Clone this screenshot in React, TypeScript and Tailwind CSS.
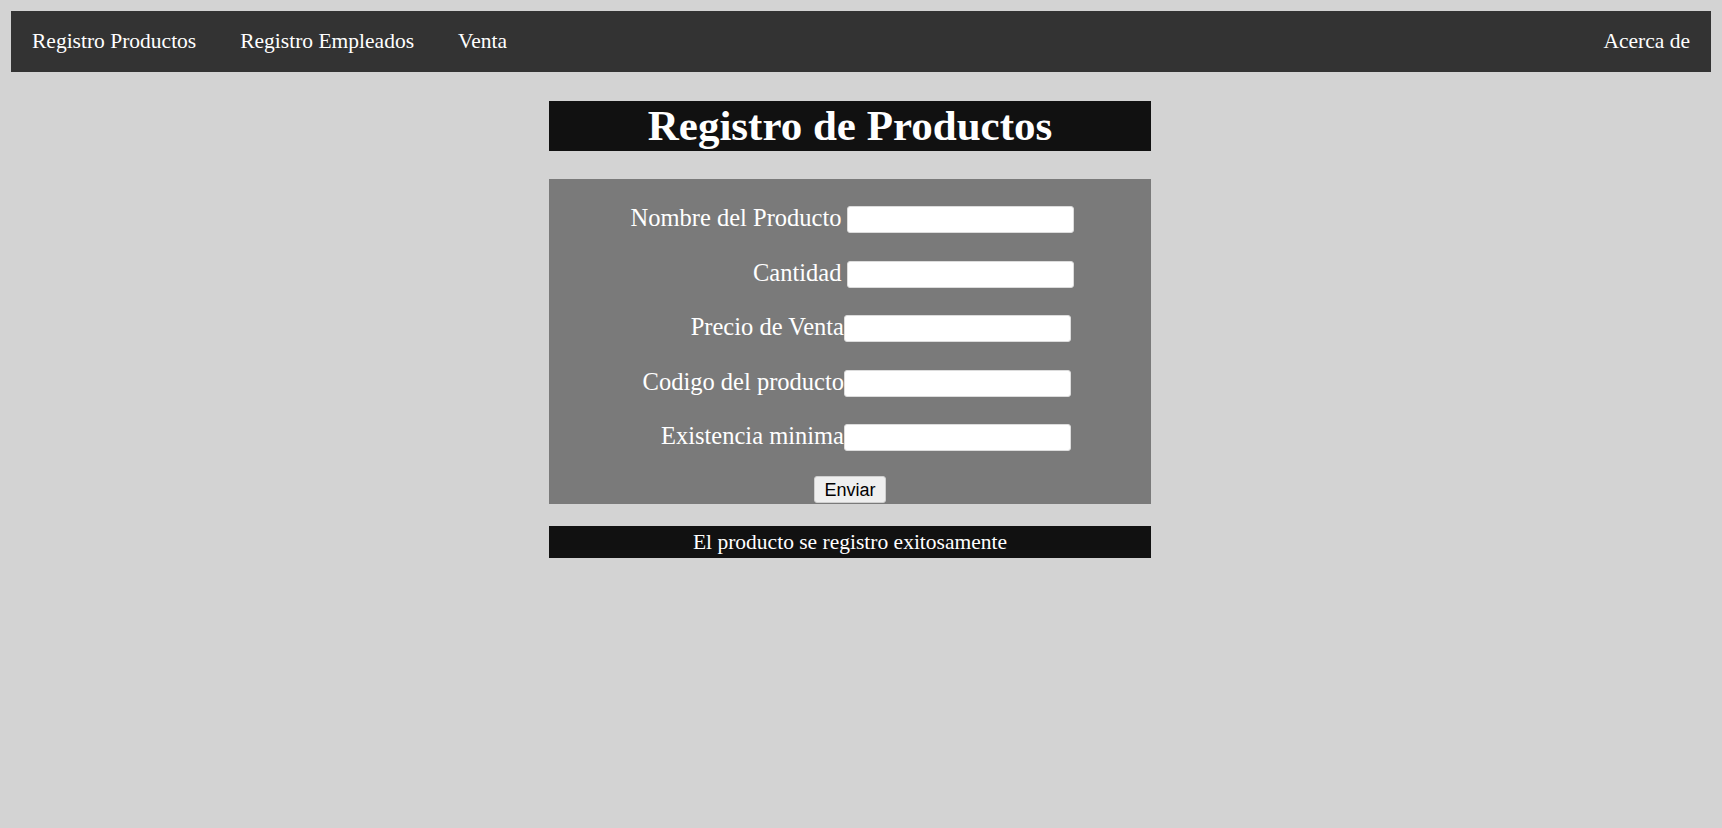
import React from "react";

const serif = { fontFamily: '"Liberation Serif", "Times New Roman", serif' };

function Row({ label, spaced }: { label: string; spaced?: boolean }) {
  return (
    <div className="flex items-center justify-center h-[27px]">
      <label className="w-[215px] pb-[4px] text-right text-white text-[24.5px] leading-[27px] whitespace-nowrap">
        {label}
      </label>
      <input
        type="text"
        className={`${spaced ? "ml-[5px]" : ""} w-[227px] h-[27px] bg-white rounded-[3px] border border-[#dcdcdc] outline-none`}
      />
    </div>
  );
}

export default function App() {
  return (
    <div className="min-h-screen bg-[#d3d3d3] px-[11px] pt-[11px]" style={serif}>
      <nav className="h-[61px] bg-[#333333] flex items-center px-[21px] text-white text-[21.5px]">
        <a className="mr-[44px] cursor-pointer">Registro Productos</a>
        <a className="mr-[44px] cursor-pointer">Registro Empleados</a>
        <a className="cursor-pointer">Venta</a>
        <a className="ml-auto cursor-pointer">Acerca de</a>
      </nav>

      <main className="ml-[538px] w-[602px]">
        <h1 className="mt-[29px] h-[50px] bg-[#111111] text-white text-center font-bold text-[43px] leading-[50px]">
          Registro de Productos
        </h1>

        <form
          className="mt-[28px] h-[325px] bg-[#7a7a7a] pt-[27px] flex flex-col"
          onSubmit={(e) => e.preventDefault()}
        >
          <div className="flex flex-col gap-[27.5px]">
            <Row label="Nombre del Producto" spaced />
            <Row label="Cantidad" spaced />
            <Row label="Precio de Venta" />
            <Row label="Codigo del producto" />
            <Row label="Existencia minima" />
          </div>
          <div className="flex justify-center mt-[25px]">
            <button
              type="submit"
              className="h-[27px] px-[9px] bg-[#efefef] border border-[#cfcfcf] rounded-[3px] text-[18px] leading-none text-black"
              style={{ fontFamily: '"Liberation Sans", Arial, sans-serif' }}
            >
              Enviar
            </button>
          </div>
        </form>

        <div className="mt-[22px] h-[32px] bg-[#111111] text-white text-[21.5px] flex items-center justify-center">
          El producto se registro exitosamente
        </div>
      </main>
    </div>
  );
}
